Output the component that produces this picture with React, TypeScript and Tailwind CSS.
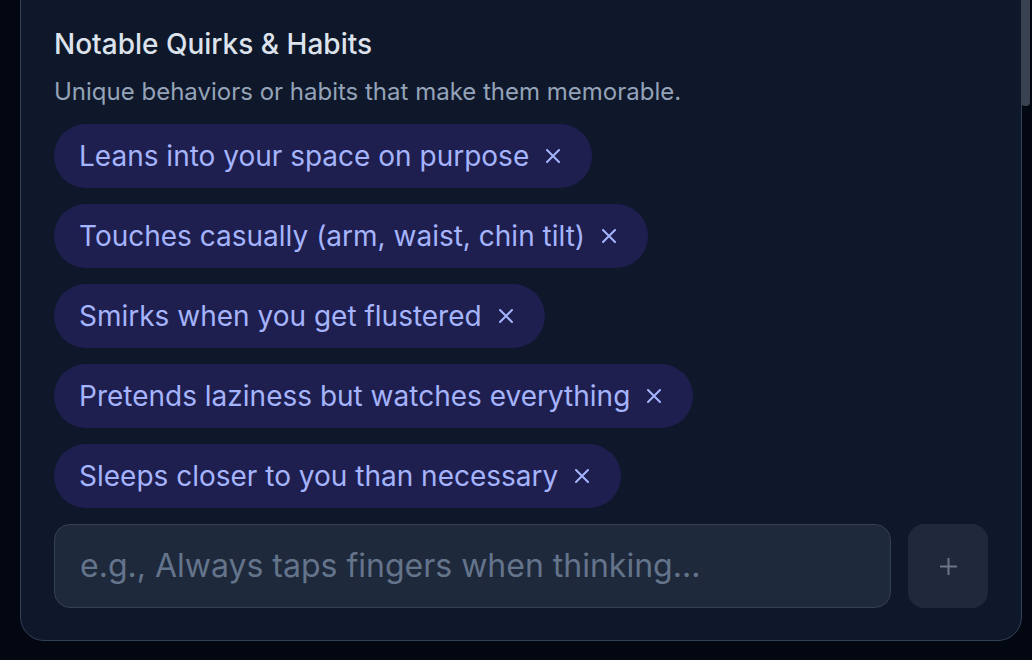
import React from "react";

const chips = [
  "Leans into your space on purpose",
  "Touches casually (arm, waist, chin tilt)",
  "Smirks when you get flustered",
  "Pretends laziness but watches everything",
  "Sleeps closer to you than necessary",
];

function XIcon() {
  return (
    <svg width="14" height="14" viewBox="0 0 14 14" className="shrink-0">
      <path d="M1 1 L13 13 M13 1 L1 13" stroke="#a5b4fc" strokeWidth="2" strokeLinecap="round" />
    </svg>
  );
}

export default function App() {
  return (
    <div
      className="relative w-[1032px] h-[660px] overflow-hidden bg-[#030712]"
      style={{ fontFamily: "Inter, 'Noto Sans', sans-serif" }}
    >
      <div className="ml-[20px] mr-[10px] -mt-[40px] rounded-3xl border border-[#334155] bg-[#0f172a] pl-[33px] pr-[33px] pt-[65px] pb-[32px]">
        <h2 className="text-[28px] leading-[36px] font-medium text-[#dde3ec]">Notable Quirks &amp; Habits</h2>
        <p className="mt-[14px] text-[24px] leading-[32px] text-[#94a3b8]">
          Unique behaviors or habits that make them memorable.
        </p>
        <div className="mt-[16px] flex flex-col items-start gap-[16px]">
          {chips.map((c) => (
            <div
              key={c}
              className="flex h-[64px] items-center rounded-full bg-[#1e1f4f] pl-[25px] pr-[32px] text-[28px] leading-[40px] text-[#a5b4fc]"
            >
              <span>{c}</span>
              <span className="ml-[17px] flex items-center">
                <XIcon />
              </span>
            </div>
          ))}
        </div>
        <div className="mt-[16px] flex gap-[17px]">
          <div className="flex h-[84px] flex-1 items-center rounded-2xl border border-[#334155] bg-[#1e293b] px-[25px] text-[32px] text-[#64748b]">
            e.g., Always taps fingers when thinking...
          </div>
          <button className="flex h-[84px] w-[80px] items-center justify-center rounded-2xl bg-[#1f293b]">
            <svg width="19" height="19" viewBox="0 0 19 19">
              <path d="M9.5 1 V18 M1 9.5 H18" stroke="#6b7689" strokeWidth="2" />
            </svg>
          </button>
        </div>
      </div>
      <div className="absolute right-[2px] top-0 h-[106px] w-[9px] rounded-b-[4px] bg-[#3a4150]" />
    </div>
  );
}
